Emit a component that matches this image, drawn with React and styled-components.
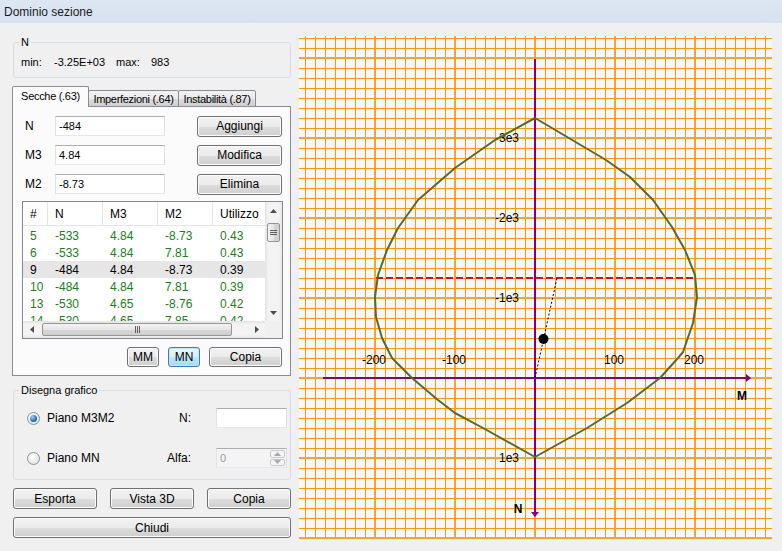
import React from 'react';
import styled, { createGlobalStyle } from 'styled-components';

const GlobalStyle = createGlobalStyle`
  html, body { margin: 0; padding: 0; background: #f0f0f0; }
  body { font-family: "Liberation Sans", Arial, sans-serif; font-size: 11px; color: #000; }
  * { box-sizing: border-box; }
`;

const Window = styled.div`
  width: 782px; height: 551px; display: flex; flex-direction: column;
  background: #f0f0f0; overflow: hidden;
`;
const TitleBar = styled.div`
  height: 23px; flex: none; display: flex; align-items: center; padding-left: 4px;
  background: linear-gradient(#dde7f3, #d6e2f0);
  font-size: 12px; color: #1b1b1b;
`;
const Main = styled.div`
  flex: 1; display: flex; min-height: 0;
`;
const LeftPane = styled.div`
  width: 297px; flex: none; display: flex; flex-direction: column; padding-left: 12px;
`;
const GroupBox = styled.div`
  position: relative; flex: none;
  border: 1px solid #d5dfe5; border-radius: 3px;
  margin-top: ${p => p.$mt}px; margin-left: 1px;
  width: 278px; height: ${p => p.$h}px;
  padding: ${p => p.$pad};
`;
const Legend = styled.span`
  position: absolute; top: -7px; left: 5px; padding: 0 2px;
  background: #f0f0f0; line-height: 13px;
`;
const MinMaxRow = styled.div`
  display: grid; grid-template-columns: 33px 62px 35px auto; line-height: 13px;
`;
const TabStrip = styled.div`
  display: flex; align-items: flex-end; height: 21px; margin-top: 8px;
  margin-bottom: -1px; position: relative; z-index: 1; flex: none;
`;
const Tab = styled.div`
  width: ${p => p.$w}px; height: ${p => (p.$active ? 21 : 17)}px;
  margin-left: ${p => (p.$first ? 0 : -1)}px;
  border: 1px solid #898c95; border-bottom: ${p => (p.$active ? 'none' : '1px solid #898c95')};
  border-radius: 2px 2px 0 0;
  background: ${p => (p.$active ? '#fbfbfb' : 'linear-gradient(#f2f2f2, #ebebeb 50%, #dddddd 51%, #cfcfcf)')};
  display: flex; align-items: center; justify-content: center;
  padding-bottom: ${p => (p.$active ? 2 : 0)}px;
  white-space: nowrap; letter-spacing: -0.3px;
  position: relative; z-index: ${p => (p.$active ? 2 : 1)};
`;
const TabPanel = styled.div`
  width: 279px; height: 270px; flex: none;
  border: 1px solid #898c95; background: #fbfbfb;
  padding: 9px 6px 0 9px; display: flex; flex-direction: column;
`;
const FieldGrid = styled.div`
  display: grid; grid-template-columns: 33px 110px 1fr 85px;
  grid-auto-rows: 20px; row-gap: 9px; width: 260px; align-items: center;
`;
const FieldLabel = styled.span`
  padding-left: 3px; font-size: 12px;
`;
const TextBox = styled.div`
  height: 20px; background: ${p => (p.$disabled ? '#f4f4f4' : '#fff')};
  border: 1px solid #abadb3; border-color: #abadb3 #dbdfe6 #e3e9ef #e2e3ea;
  display: flex; align-items: center; padding-left: 3px;
  color: ${p => (p.$disabled ? '#9a9a9a' : '#000')}; font-size: 11px;
  position: relative;
`;
const Button = styled.div`
  height: ${p => p.$h || 21}px; width: ${p => (p.$w ? `${p.$w}px` : 'auto')};
  grid-column: ${p => p.$col || 'auto'};
  border: 1px solid ${p => (p.$focus ? '#3c7fb1' : '#707070')}; border-radius: 3px;
  background: ${p => (p.$focus
    ? 'linear-gradient(#eaf6fd, #d9f0fc 50%, #bee6fd 51%, #a7d9f5)'
    : 'linear-gradient(#f2f2f2, #ebebeb 50%, #dddddd 51%, #cfcfcf)')};
  box-shadow: inset 0 0 0 1px ${p => (p.$focus ? '#c4e5f6' : '#fcfcfc')};
  display: flex; align-items: center; justify-content: center; font-size: 12px;
`;
const ListView = styled.div`
  margin-top: 7px; width: 261px; height: 138px; flex: none;
  border: 1px solid #828790; background: #fff;
  display: grid; grid-template-columns: 242px 17px; grid-template-rows: 119px 17px;
`;
const ListContent = styled.div`
  overflow: hidden; display: flex; flex-direction: column;
`;
const ListHeader = styled.div`
  display: grid; grid-template-columns: 25px 55px 55px 55px 60px; height: 24px; flex: none;
  border-bottom: 1px solid #e5e5e5;
`;
const HeaderCell = styled.div`
  padding-left: 7px; display: flex; align-items: center; font-size: 12px;
  border-right: 1px solid #e5e5e5;
`;
const ListRows = styled.div`
  padding-top: 1px;
`;
const ListRow = styled.div`
  display: grid; grid-template-columns: 25px 55px 55px 55px 60px; height: 17px;
  background: ${p => (p.$sel ? '#e6e6e6' : 'transparent')};
  color: ${p => (p.$sel ? '#000' : '#1a7f1a')}; font-size: 12px;
`;
const Cell = styled.div`
  padding-left: 7px; display: flex; align-items: center;
`;
const VScroll = styled.div`
  background: linear-gradient(90deg, #e3e3e3, #f3f3f3 20%, #f3f3f3 80%, #e8e8e8);
  display: flex; flex-direction: column; align-items: center;
`;
const HScroll = styled.div`
  background: linear-gradient(#e3e3e3, #f3f3f3 20%, #f3f3f3 80%, #e8e8e8);
  display: flex; align-items: center;
`;
const ScrollCorner = styled.div`
  background: #f0f0f0;
`;
const ScrollArrow = styled.div`
  width: 17px; height: 17px; flex: none; display: flex; align-items: center; justify-content: center;
`;
const VThumb = styled.div`
  width: 13px; height: 19px; margin-top: 4px; border: 1px solid #959595; border-radius: 2px;
  background: linear-gradient(90deg, #f3f3f3, #e5e5e5 50%, #d7d7d7 51%, #cfcfcf);
  display: flex; align-items: center; justify-content: center;
`;
const HThumb = styled.div`
  height: 13px; width: 190px; margin-left: 2px; border: 1px solid #959595; border-radius: 2px;
  background: linear-gradient(#f3f3f3, #e5e5e5 50%, #d7d7d7 51%, #cfcfcf);
  display: flex; align-items: center; justify-content: center;
`;
const Spacer = styled.div`
  flex: 1;
`;
const ListButtons = styled.div`
  margin-top: 8px; display: flex; justify-content: flex-end; gap: 9px; width: 261px; padding-right: 1px;
`;
const OptionGrid = styled.div`
  display: grid; grid-template-columns: 1fr auto 71px; column-gap: 25px;
  grid-auto-rows: 20px; row-gap: 20px; align-items: center;
`;
const RadioLabel = styled.div`
  display: flex; align-items: center; gap: 7px; font-size: 12px;
`;
const RadioCircle = styled.span`
  width: 13px; height: 13px; border-radius: 50%; flex: none;
  border: 1px solid #8e8f8f;
  background: radial-gradient(circle at 40% 35%, #fff, #dcdcdc);
  display: flex; align-items: center; justify-content: center;
  &::after {
    content: ''; display: ${p => (p.$checked ? 'block' : 'none')};
    width: 7px; height: 7px; border-radius: 50%;
    background: radial-gradient(circle at 35% 30%, #9fd6f6, #2a6fb6 60%, #14428a);
  }
`;
const OptionLabel = styled.span`
  text-align: right; font-size: 12px;
`;
const SpinButtons = styled.div`
  position: absolute; right: 1px; top: 1px; bottom: 1px; width: 15px;
  display: flex; flex-direction: column; gap: 1px;
`;
const SpinHalf = styled.div`
  flex: 1; border: 1px solid #c9c9c9; border-radius: 2px; background: #f4f4f4;
  display: flex; align-items: center; justify-content: center;
`;
const ButtonRow = styled.div`
  display: flex; gap: 13px; margin-top: ${p => p.$mt}px; margin-left: 1px; width: 278px;
`;
const ChartPane = styled.div`
  flex: 1; min-width: 0; display: flex;
`;

const Arrow = ({ dir, color = '#4d4d4d' }) => {
  const pts = {
    up: '0,4 3.5,0 7,4',
    down: '0,0 3.5,4 7,0',
    left: '4,0 0,3.5 4,7',
    right: '0,0 4,3.5 0,7',
  }[dir];
  const horiz = dir === 'left' || dir === 'right';
  return (
    <svg width={horiz ? 4 : 7} height={horiz ? 7 : 4} viewBox={horiz ? '0 0 4 7' : '0 0 7 4'}>
      <polygon points={pts} fill={color} />
    </svg>
  );
};

const Grip = ({ vertical }) => (
  <svg width="7" height="7" viewBox="0 0 7 7">
    {[0, 2, 4].map(i => vertical
      ? <line key={i} x1="0" y1={i + 1.5} x2="7" y2={i + 1.5} stroke="#606060" strokeWidth="1" />
      : <line key={i} x1={i + 1.5} y1="0" x2={i + 1.5} y2="7" stroke="#606060" strokeWidth="1" />)}
  </svg>
);

const rows = [
  ['5', '-533', '4.84', '-8.73', '0.43'],
  ['6', '-533', '4.84', '7.81', '0.43'],
  ['9', '-484', '4.84', '-8.73', '0.39', true],
  ['10', '-484', '4.84', '7.81', '0.39'],
  ['13', '-530', '4.65', '-8.76', '0.42'],
  ['14', '-530', '4.65', '7.85', '0.42'],
];

const curve = [
  [535, 118], [606, 160], [630, 177], [653, 200], [672, 227], [685, 250], [695, 275], [697, 297],
  [693, 323], [683, 352], [678, 358], [660, 378], [627, 403], [587, 428], [535, 457],
  [483, 428], [455, 413], [438, 400], [412, 378], [392, 358], [382, 338], [376, 317], [375, 297],
  [378, 275], [387, 250], [398, 228], [418, 200], [455, 168], [495, 140], [535, 118],
];

const Chart = () => {
  const vx = [];
  for (let x = 305; x <= 765; x += 10) vx.push(x);
  const hy = [];
  for (let y = 38; y <= 538; y += 10) hy.push(y);
  const majX = [375, 455, 535, 615, 695];
  const majY = [58, 138, 218, 298, 378, 458, 538];
  const minor = '#ff9514';
  const major = '#f5a23a';
  return (
    <svg width="485" height="528" viewBox="297 23 485 528">
      <rect x="299" y="36" width="473" height="503" fill="#f7f7f7" />
      {hy.filter(y => !majY.includes(y)).map(y => (
        <line key={`h${y}`} x1="299" y1={y + 0.5} x2="772" y2={y + 0.5} stroke={minor} strokeWidth="1" />
      ))}
      {vx.filter(x => !majX.includes(x)).map(x => (
        <line key={`v${x}`} x1={x + 0.5} y1="36" x2={x + 0.5} y2="538" stroke={minor} strokeWidth="1" />
      ))}
      {majY.map(y => (
        <line key={`H${y}`} x1="299" y1={y} x2="772" y2={y} stroke={major} strokeWidth="2" />
      ))}
      {majX.map(x => (
        <line key={`V${x}`} x1={x} y1="36" x2={x} y2="538" stroke={major} strokeWidth="2" />
      ))}
      <line x1="535" y1="59" x2="535" y2="513" stroke="#800080" strokeWidth="2" />
      <polygon points="531,512 539,512 535,517" fill="#800080" />
      <line x1="323" y1="378" x2="747" y2="378" stroke="#800080" strokeWidth="2" />
      <polygon points="746,374 746,382 751,378" fill="#800080" />
      <line x1="376" y1="278" x2="696" y2="278" stroke="#c41818" strokeWidth="2" strokeDasharray="7 3" />
      <line x1="535" y1="378" x2="557" y2="278" stroke="#000" strokeWidth="1" strokeDasharray="2 2" />
      <g fontFamily="Liberation Sans, Arial, sans-serif" fontSize="12" fill="#000">
        <text x="374" y="364" textAnchor="middle">-200</text>
        <text x="454" y="364" textAnchor="middle">-100</text>
        <text x="614" y="364" textAnchor="middle">100</text>
        <text x="694" y="364" textAnchor="middle">200</text>
        <text x="519" y="142" textAnchor="end">-3e3</text>
        <text x="519" y="222" textAnchor="end">-2e3</text>
        <text x="519" y="302" textAnchor="end">-1e3</text>
        <text x="519" y="462" textAnchor="end">1e3</text>
        <text x="742" y="400" textAnchor="middle" fontWeight="bold">M</text>
        <text x="518" y="513" textAnchor="middle" fontWeight="bold">N</text>
      </g>
      <polyline points={curve.map(p => p.join(',')).join(' ')} fill="none" stroke="#556b2f" strokeWidth="2" strokeLinejoin="round" />
      <circle cx="543.5" cy="339" r="5" fill="#000" />
    </svg>
  );
};

export default function App() {
  return (
    <>
      <GlobalStyle />
      <Window>
        <TitleBar>Dominio sezione</TitleBar>
        <Main>
          <LeftPane>
            <GroupBox $mt={19} $h={36} $pad="13px 0 0 7px">
              <Legend>N</Legend>
              <MinMaxRow>
                <span>min:</span>
                <span>-3.25E+03</span>
                <span>max:</span>
                <span>983</span>
              </MinMaxRow>
            </GroupBox>
            <TabStrip>
              <Tab $w={77} $active $first>Secche (.63)</Tab>
              <Tab $w={91}>Imperfezioni (.64)</Tab>
              <Tab $w={78}>Instabilità (.87)</Tab>
            </TabStrip>
            <TabPanel>
              <FieldGrid>
                <FieldLabel>N</FieldLabel>
                <TextBox>-484</TextBox>
                <Button $col="4">Aggiungi</Button>
                <FieldLabel>M3</FieldLabel>
                <TextBox>4.84</TextBox>
                <Button $col="4">Modifica</Button>
                <FieldLabel>M2</FieldLabel>
                <TextBox>-8.73</TextBox>
                <Button $col="4">Elimina</Button>
              </FieldGrid>
              <ListView>
                <ListContent>
                  <ListHeader>
                    <HeaderCell>#</HeaderCell>
                    <HeaderCell>N</HeaderCell>
                    <HeaderCell>M3</HeaderCell>
                    <HeaderCell>M2</HeaderCell>
                    <HeaderCell>Utilizzo</HeaderCell>
                  </ListHeader>
                  <ListRows>
                    {rows.map(r => (
                      <ListRow key={r[0]} $sel={r[5]}>
                        {r.slice(0, 5).map((c, i) => <Cell key={i}>{c}</Cell>)}
                      </ListRow>
                    ))}
                  </ListRows>
                </ListContent>
                <VScroll>
                  <ScrollArrow><Arrow dir="up" /></ScrollArrow>
                  <VThumb><Grip vertical /></VThumb>
                  <Spacer />
                  <ScrollArrow><Arrow dir="down" /></ScrollArrow>
                </VScroll>
                <HScroll>
                  <ScrollArrow><Arrow dir="left" /></ScrollArrow>
                  <HThumb><Grip /></HThumb>
                  <Spacer />
                  <ScrollArrow><Arrow dir="right" /></ScrollArrow>
                </HScroll>
                <ScrollCorner />
              </ListView>
              <ListButtons>
                <Button $w={32} $h={20}>MM</Button>
                <Button $w={32} $h={20} $focus>MN</Button>
                <Button $w={73} $h={20}>Copia</Button>
              </ListButtons>
            </TabPanel>
            <GroupBox $mt={14} $h={90} $pad="17px 3px 0 13px">
              <Legend>Disegna grafico</Legend>
              <OptionGrid>
                <RadioLabel><RadioCircle $checked />Piano M3M2</RadioLabel>
                <OptionLabel>N:</OptionLabel>
                <TextBox />
                <RadioLabel><RadioCircle />Piano MN</RadioLabel>
                <OptionLabel>Alfa:</OptionLabel>
                <TextBox $disabled>
                  0
                  <SpinButtons>
                    <SpinHalf><Arrow dir="up" color="#a8a8a8" /></SpinHalf>
                    <SpinHalf><Arrow dir="down" color="#a8a8a8" /></SpinHalf>
                  </SpinButtons>
                </TextBox>
              </OptionGrid>
            </GroupBox>
            <ButtonRow $mt={8}>
              <Button $w={84}>Esporta</Button>
              <Button $w={84}>Vista 3D</Button>
              <Button $w={84}>Copia</Button>
            </ButtonRow>
            <ButtonRow $mt={8}>
              <Button $w={278}>Chiudi</Button>
            </ButtonRow>
          </LeftPane>
          <ChartPane>
            <Chart />
          </ChartPane>
        </Main>
      </Window>
    </>
  );
}
